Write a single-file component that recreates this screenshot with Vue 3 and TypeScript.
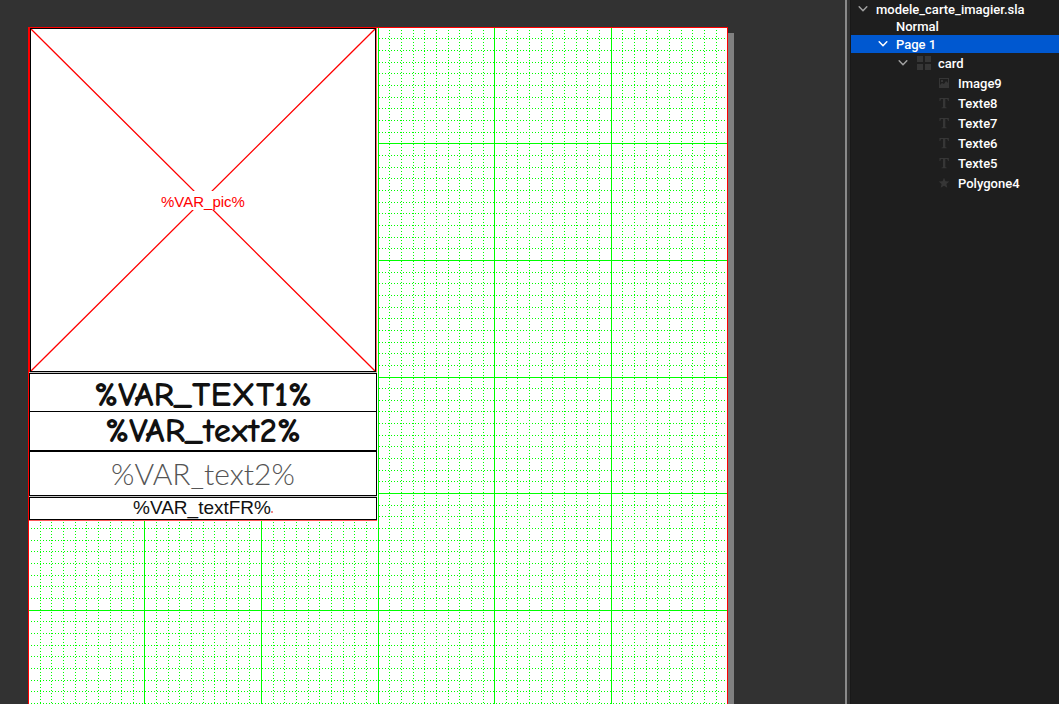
<script setup lang="ts">
import { ref } from 'vue'

type IconName = 'group' | 'image' | 'text' | 'star' | null

interface TreeRow {
  label: string
  level: number
  expandable: boolean
  icon: IconName
}

interface GridLine {
  pos: number
  major: boolean
}

const rows: TreeRow[] = [
  { label: 'modele_carte_imagier.sla', level: 0, expandable: true, icon: null },
  { label: 'Normal', level: 1, expandable: false, icon: null },
  { label: 'Page 1', level: 1, expandable: true, icon: null },
  { label: 'card', level: 2, expandable: true, icon: 'group' },
  { label: 'Image9', level: 3, expandable: false, icon: 'image' },
  { label: 'Texte8', level: 3, expandable: false, icon: 'text' },
  { label: 'Texte7', level: 3, expandable: false, icon: 'text' },
  { label: 'Texte6', level: 3, expandable: false, icon: 'text' },
  { label: 'Texte5', level: 3, expandable: false, icon: 'text' },
  { label: 'Polygone4', level: 3, expandable: false, icon: 'star' },
]

const selected = ref('Page 1')

const pageWidth = 700
const pageHeight = 990
const gridStep = 11.657

// Grid lines are snapped to whole pixels; every tenth one is solid.
function gridLines(offset: number, limit: number): GridLine[] {
  const lines: GridLine[] = []
  for (let n = 1; offset + n * gridStep < limit - 1; n++) {
    lines.push({ pos: Math.floor(offset + n * gridStep) + 0.5, major: n % 10 === 0 })
  }
  return lines
}

const columns = gridLines(0.405, pageWidth)
const lines = gridLines(0.3, pageHeight)
</script>

<template>
  <div class="app">
    <main class="canvas">
      <div class="page">
        <svg class="grid" :width="pageWidth" :height="pageHeight" aria-hidden="true">
          <line
            v-for="l in columns"
            :key="'c' + l.pos"
            :class="{ minor: !l.major }"
            :x1="l.pos"
            y1="0"
            :x2="l.pos"
            :y2="pageHeight"
          />
          <line
            v-for="l in lines"
            :key="'l' + l.pos"
            :class="{ minor: !l.major }"
            x1="0"
            :y1="l.pos"
            :x2="pageWidth"
            :y2="l.pos"
          />
        </svg>
        <div class="card">
          <div class="picture">
            <svg class="cross" viewBox="0 0 344 342" preserveAspectRatio="none" aria-hidden="true">
              <path d="M0 0L344 342M344 0L0 342" />
            </svg>
            <span class="picture-label">%VAR_pic%</span>
          </div>
          <div class="field title">%VAR_TEXT1%</div>
          <div class="field script">%VAR_text2%</div>
          <div class="field cursive">%VAR_text2%</div>
          <div class="field french"><span>%VAR_textFR%</span><i class="end-mark"></i></div>
        </div>
      </div>
    </main>
    <div class="splitter"></div>
    <aside class="outline">
      <ul class="tree">
        <li
          v-for="row in rows"
          :key="row.label"
          class="row"
          :class="['level-' + row.level, { selected: row.label === selected }]"
          @click="selected = row.label"
        >
          <button v-if="row.expandable" class="toggle" type="button" :aria-label="'Toggle ' + row.label">
            <svg width="10" height="6" viewBox="0 0 10 6"><path d="M1.2 0.8L5 4.7L8.8 0.8" /></svg>
          </button>
          <span v-else class="toggle"></span>
          <svg v-if="row.icon" class="icon" width="16" height="16" viewBox="0 0 16 16" aria-hidden="true">
            <path v-if="row.icon === 'group'" d="M1 1h6v6h-6zM9 1h6v6h-6zM1 9h6v6h-6zM9 9h6v6h-6z" />
            <path
              v-else-if="row.icon === 'image'"
              fill-rule="evenodd"
              d="M3 3h10v10h-10zM4 4v6l2-2 2 1 2-3 2 2v-4zM5 5h2v2h-2z"
            />
            <path
              v-else-if="row.icon === 'text'"
              d="M3.500 3h9.300v3h-.8c-.2-1.400-.7-2-1.800-2h-.9v7.500c0 .8.300 1 1.400 1.100v.6h-5.100v-.6c1.100-.1 1.400-.3 1.400-1.100v-7.500h-.9c-1.100 0-1.600.6-1.800 2h-.8z"
            />
            <path v-else d="M8 2.800l1.500 3.500 3.800.3-2.900 2.500.9 3.700L8 10.800l-3.300 2 .9-3.700-2.900-2.500 3.800-.3z" />
          </svg>
          <span class="label">{{ row.label }}</span>
        </li>
      </ul>
    </aside>
  </div>
</template>

<style>
body {
  margin: 0;
  background: #323232;
}
</style>

<style scoped>
.app {
  display: flex;
  height: 100vh;
  overflow: hidden;
  font-family: Roboto, "Liberation Sans", sans-serif;
}

.canvas {
  position: relative;
  flex: 1;
  min-width: 0;
  overflow: hidden;
  background: #323232;
}

.page {
  position: absolute;
  left: 28px;
  top: 27px;
  background: #fff;
  box-shadow: 6px 6px 0 #808080;
}

.page::after {
  content: "";
  position: absolute;
  inset: 0;
  border: 1px solid #f00;
  pointer-events: none;
}

.grid {
  display: block;
  shape-rendering: crispEdges;
}

.grid line {
  stroke: #0f0;
  stroke-width: 1;
}

.grid .minor {
  stroke-dasharray: 1 2;
}

.card {
  position: absolute;
  left: 1px;
  top: 1px;
  width: 348px;
  display: flex;
  flex-direction: column;
  background: #c4c4c4;
  box-shadow: 0 1px 0 #ff5a5a, 1px 0 0 #fff;
}

.picture {
  display: grid;
  place-items: center;
  box-sizing: border-box;
  height: 344px;
  margin: 0 1px 1px;
  border: 1px solid #000;
  background: #fff;
  box-shadow: -1px 0 0 #f00, 1px 0 0 #ff5a5a;
}

.cross {
  grid-area: 1 / 1;
  width: 100%;
  height: 100%;
}

.cross path {
  fill: none;
  stroke: #f00;
  stroke-width: 1.3;
}

.picture-label {
  grid-area: 1 / 1;
  z-index: 1;
  padding-top: 2px;
  background: #fff;
  color: #f00;
  font: 15px/17px "Liberation Sans", Arial, sans-serif;
}

.field {
  display: flex;
  justify-content: center;
  align-items: center;
  box-sizing: border-box;
  border: 1px solid #000;
  background: #fff;
  color: #111;
  white-space: nowrap;
}

.title,
.script {
  font: 700 35px/36px "Comic Sans MS", "Comic Neue", "Open Sans", sans-serif;
}

.title {
  height: 38px;
  padding-top: 4px;
  border-bottom: 0;
}

.script {
  height: 40px;
}

.cursive {
  height: 45px;
  margin-bottom: 1px;
  color: #555;
  font: 300 30px/43px Lato, sans-serif;
}

.french {
  height: 23px;
  padding-bottom: 2px;
  font: 19px/19px "Liberation Sans", Arial, sans-serif;
}

.end-mark {
  align-self: flex-end;
  width: 2px;
  height: 2px;
  margin-bottom: 4px;
  background: #e88;
}

.splitter {
  box-sizing: border-box;
  width: 6px;
  border-left: 2px solid #8a8a8a;
  border-right: 1px solid #191919;
  background: #323232;
}

.outline {
  width: 208px;
  overflow: hidden;
  background: #1e1e1e;
}

.tree {
  margin: 0;
  padding: 0;
  list-style: none;
}

.row {
  display: flex;
  align-items: center;
  height: 20px;
  color: #fff;
  font-size: 13px;
  font-weight: 500;
  line-height: 16px;
  white-space: nowrap;
  cursor: default;
}

.level-0 {
  height: 17px;
  padding-left: 2px;
}

.level-1 {
  height: 18px;
  padding-left: 22px;
}

.level-2 {
  padding-left: 42px;
}

.level-3 {
  padding-left: 62px;
}

.selected {
  background: #0058d0;
}

.toggle {
  display: flex;
  justify-content: center;
  align-items: center;
  flex: none;
  width: 20px;
  height: 16px;
  margin: 0 3px 0 0;
  padding: 0;
  border: 0;
  background: none;
}

.toggle path {
  fill: none;
  stroke: #a0a0a0;
  stroke-width: 1.5;
  stroke-linecap: round;
  stroke-linejoin: round;
}

.selected .toggle path {
  stroke: #fff;
}

.icon {
  flex: none;
  margin-right: 6px;
  fill: #363636;
}

.label {
  padding-top: 2px;
}
</style>
